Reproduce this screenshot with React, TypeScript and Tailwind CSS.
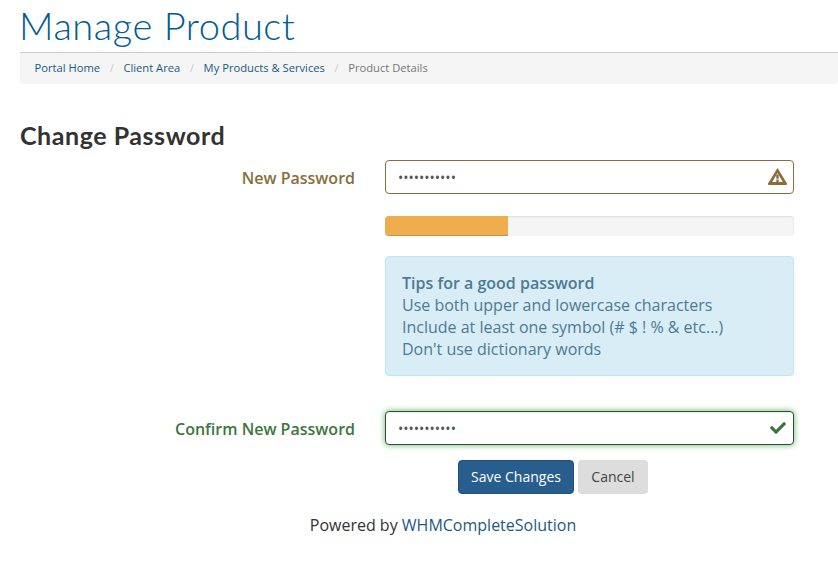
import { FaCheck } from "react-icons/fa";

const crumbs = ["Portal Home", "Client Area", "My Products & Services"];

const tips = [
  "Use both upper and lowercase characters",
  "Include at least one symbol (# $ ! % & etc...)",
  "Don't use dictionary words",
];

function WarningIcon() {
  return (
    <svg viewBox="0 0 19 17" className="absolute top-[8px] right-[7px] h-[17px] w-[19px] text-[#8a6d3b]">
      <path
        fill="currentColor"
        fillRule="evenodd"
        d="M9.5 0 L19 15.5 Q19.2 17 18 17 L1 17 Q-0.2 17 0 15.5 Z M9.5 5 L4.2 14 L14.8 14 Z"
      />
      <rect x="8.3" y="6.5" width="2.4" height="4.2" fill="currentColor" />
      <rect x="8.3" y="11.5" width="2.4" height="2.5" fill="currentColor" />
    </svg>
  );
}

export default function App() {
  return (
    <div className="h-[572px] w-[838px] overflow-hidden bg-white font-['Open_Sans',sans-serif] text-[14px] text-[#333]">
      <div className="pl-5">
        <h1 className="-ml-px h-[52px] pt-[4px] font-['Lato',sans-serif] text-[38px] leading-[43px] font-light tracking-[0.55px] text-[#005b94]">
          Manage Product
        </h1>
        <nav className="flex h-[32px] items-center rounded-b-[4px] border-t border-[#ccc] bg-[#f5f5f5] pl-[14.5px] text-[11.2px]">
          {crumbs.map((c) => (
            <span key={c} className="flex items-center">
              <a className="text-[#1b5a82]">{c}</a>
              <span className="px-[9.6px] text-[#ccc]">/</span>
            </span>
          ))}
          <span className="text-[#777]">Product Details</span>
        </nav>
        <h2 className="mt-[36px] h-[40px] font-['Lato',sans-serif] text-[25px] leading-[30px] font-bold tracking-[0.55px] text-[#333]">
          Change Password
        </h2>
      </div>

      <form className="grid grid-cols-[335px_409px] gap-x-[30px] pl-5">
        <label className="h-[34px] text-right text-[16px] leading-[36px] font-semibold text-[#8a6d3b]">
          New Password
        </label>
        <div className="relative h-[34px]">
          <input
            type="password"
            readOnly
            value="abcdefghijk"
            className="h-[34px] w-full rounded-[4px] border border-[#8a6d3b] bg-white px-[12px] text-[14px] text-[#555] outline-none"
          />
          <WarningIcon />
        </div>

        <div />
        <div className="mt-[22px] h-[20px] overflow-hidden rounded-[4px] bg-[#f5f5f5] shadow-[inset_0_1px_2px_rgba(0,0,0,0.1)]">
          <div className="h-full w-[30%] bg-[#f0ad4e] shadow-[inset_0_-1px_0_rgba(0,0,0,0.15)]" />
        </div>

        <div />
        <div className="mt-[20px] h-[120px] rounded-[4px] border border-[#bce8f1] bg-[#d9edf7] pt-[15px] pr-[15px] pl-[16px] text-[16px] leading-[22px] text-[#4c7a94]">
          <strong className="block font-semibold">Tips for a good password</strong>
          {tips.map((t) => (
            <div key={t}>{t}</div>
          ))}
        </div>

        <label className="mt-[35px] h-[34px] text-right text-[16px] leading-[36px] font-semibold text-[#3c763d]">
          Confirm New Password
        </label>
        <div className="relative mt-[35px] h-[34px]">
          <input
            type="password"
            readOnly
            value="abcdefghijk"
            className="h-[34px] w-full rounded-[4px] border border-[#2b542c] bg-white px-[12px] text-[14px] text-[#555] shadow-[inset_0_1px_1px_rgba(0,0,0,0.075),0_0_6px_#67b168] outline-none"
          />
          <FaCheck className="absolute top-[9px] right-[8px] h-[16px] w-[16px] text-[#3c763d]" />
        </div>
      </form>

      <div className="mt-[15px] flex justify-center gap-1 pl-[268px]">
        <button className="h-[34px] w-[116px] rounded-[4px] border border-[#255075] bg-[#285e8e] pb-[2px] text-[14px] text-white">
          Save Changes
        </button>
        <button className="h-[34px] w-[70px] rounded-[4px] bg-[#ddd] pb-[2px] text-[14px] text-[#444]">Cancel</button>
      </div>

      <p className="mt-[20px] pl-[48px] text-center text-[16px] leading-[22px] text-[#333]">
        Powered by <a className="text-[#1b5a82]">WHMCompleteSolution</a>
      </p>
    </div>
  );
}
